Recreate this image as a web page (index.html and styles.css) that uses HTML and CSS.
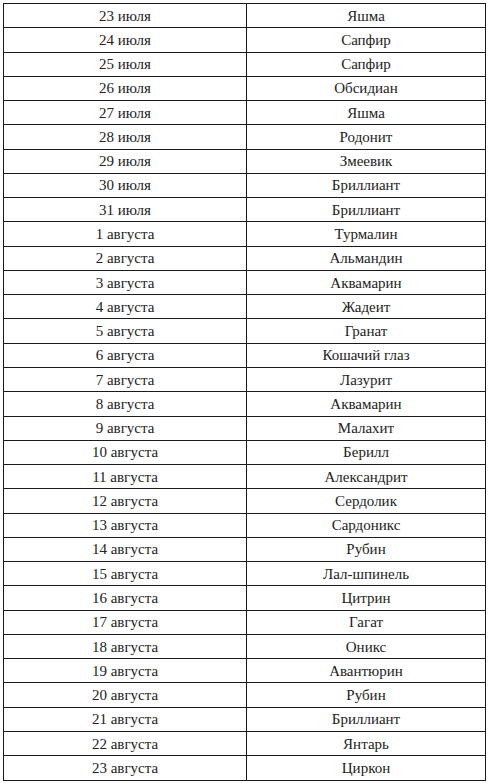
FILE: index.html
```html
<!DOCTYPE html>
<html lang="ru">
<head>
<meta charset="utf-8">
<link rel="stylesheet" href="styles.css">
</head>
<body>
<table class="stones">
<tbody>
<tr><td>23 июля</td><td>Яшма</td></tr>
<tr><td>24 июля</td><td>Сапфир</td></tr>
<tr><td>25 июля</td><td>Сапфир</td></tr>
<tr><td>26 июля</td><td>Обсидиан</td></tr>
<tr><td>27 июля</td><td>Яшма</td></tr>
<tr><td>28 июля</td><td>Родонит</td></tr>
<tr><td>29 июля</td><td>Змеевик</td></tr>
<tr><td>30 июля</td><td>Бриллиант</td></tr>
<tr><td>31 июля</td><td>Бриллиант</td></tr>
<tr><td>1 августа</td><td>Турмалин</td></tr>
<tr><td>2 августа</td><td>Альмандин</td></tr>
<tr><td>3 августа</td><td>Аквамарин</td></tr>
<tr><td>4 августа</td><td>Жадеит</td></tr>
<tr><td>5 августа</td><td>Гранат</td></tr>
<tr><td>6 августа</td><td>Кошачий глаз</td></tr>
<tr><td>7 августа</td><td>Лазурит</td></tr>
<tr><td>8 августа</td><td>Аквамарин</td></tr>
<tr><td>9 августа</td><td>Малахит</td></tr>
<tr><td>10 августа</td><td>Берилл</td></tr>
<tr><td>11 августа</td><td>Александрит</td></tr>
<tr><td>12 августа</td><td>Сердолик</td></tr>
<tr><td>13 августа</td><td>Сардоникс</td></tr>
<tr><td>14 августа</td><td>Рубин</td></tr>
<tr><td>15 августа</td><td>Лал-шпинель</td></tr>
<tr><td>16 августа</td><td>Цитрин</td></tr>
<tr><td>17 августа</td><td>Гагат</td></tr>
<tr><td>18 августа</td><td>Оникс</td></tr>
<tr><td>19 августа</td><td>Авантюрин</td></tr>
<tr><td>20 августа</td><td>Рубин</td></tr>
<tr><td>21 августа</td><td>Бриллиант</td></tr>
<tr><td>22 августа</td><td>Янтарь</td></tr>
<tr><td>23 августа</td><td>Циркон</td></tr>
</tbody>
</table>
</body>
</html>
```

FILE: styles.css
```css
html, body {
  margin: 0;
  padding: 0;
  background: #ffffff;
}
body {
  padding: 3px 4px 0 3px;
  font-family: "Liberation Serif", "Times New Roman", serif;
  color: #222222;
}
.stones {
  border-collapse: collapse;
  width: 483px;
  table-layout: fixed;
}
.stones td {
  border: 1.5px solid #1a1a1a;
  height: 23.27px;
  padding: 0;
  text-align: center;
  vertical-align: middle;
  font-size: 15px;
  line-height: 18px;
}
.stones td:first-child {
  width: 242px;
}
```
